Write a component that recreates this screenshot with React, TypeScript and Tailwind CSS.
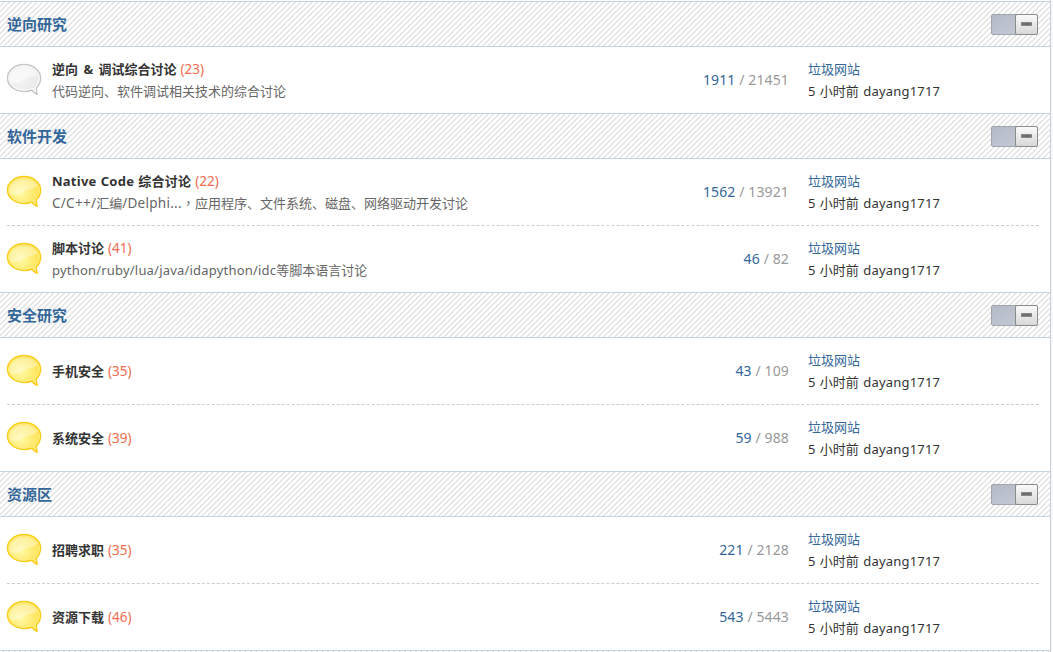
import type { ReactNode } from "react";
import clsx from "clsx";

type Forum = {
    name: string;
    nameClasses?: string;
    today: number;
    desc?: ReactNode;
    threads: number;
    posts: number;
    read?: boolean;
};

type Category = {
    title: string;
    forums: Forum[];
};

const categories: Category[] = [
    {
        title: "逆向研究",
        forums: [
            {
                name: "逆向 & 调试综合讨论",
                nameClasses: "[word-spacing:2px]",
                today: 23,
                desc: "代码逆向、软件调试相关技术的综合讨论",
                threads: 1911,
                posts: 21451,
                read: true,
            },
        ],
    },
    {
        title: "软件开发",
        forums: [
            {
                name: "Native Code 综合讨论",
                nameClasses: "tracking-[0.25px] [word-spacing:0.5px]",
                today: 22,
                desc: (
                    <>
                        <span className="text-[13.5px] tracking-[0.27px]">C/C++/</span>汇编
                        <span className="text-[13.5px] tracking-[0.27px]">/Delphi...</span>
                        <span className="font-['Noto_Sans_CJK_TC',sans-serif] leading-none">，</span>应用程序、文件系统、磁盘、网络驱动开发讨论
                    </>
                ),
                threads: 1562,
                posts: 13921,
            },
            {
                name: "脚本讨论",
                today: 41,
                desc: (
                    <>
                        <span className="tracking-[0.2px]">python/ruby/lua/java/idapython/idc</span>等脚本语言讨论
                    </>
                ),
                threads: 46,
                posts: 82,
            },
        ],
    },
    {
        title: "安全研究",
        forums: [
            { name: "手机安全", today: 35, threads: 43, posts: 109 },
            { name: "系统安全", today: 39, threads: 59, posts: 988 },
        ],
    },
    {
        title: "资源区",
        forums: [
            { name: "招聘求职", today: 35, threads: 221, posts: 2128 },
            { name: "资源下载", today: 46, threads: 543, posts: 5443 },
        ],
    },
];

const hatch = "bg-[repeating-linear-gradient(135deg,#fff_0px,#fff_1.9px,#dfdfdf_2.6px,#dfdfdf_3.1px,#fff_3.889px)]";

const BubbleIcon = ({ read }: { read?: boolean }) => {
    const id = read ? "bubble-read" : "bubble-new";
    return (
        <svg width="36" height="33" viewBox="0 0 36 33" className="block shrink-0">
            <defs>
                <radialGradient id={id} cx="0.4" cy="0.55" r="0.65">
                    <stop offset="0" stopColor={read ? "#f3f3f3" : "#fffaa8"} />
                    <stop offset="1" stopColor={read ? "#e8e8e8" : "#ffe04a"} />
                </radialGradient>
            </defs>
            <path
                d="M18 1.5C8.8 1.5 1.5 7.5 1.5 15S8.8 28.5 18 28.5c2.9 0 5.6-.5 8-1.5 1.2 2.2 3 3.700 5.300 4.200-.9-1.900-1.200-4.100-.8-6.500 2.600-2.500 4.100-5.800 4.100-9.700C34.600 7.500 27.200 1.500 18 1.500Z"
                fill={`url(#${id})`}
                stroke={read ? "#c6c6c6" : "#fccb16"}
                strokeWidth="1.4"
                strokeLinejoin="round"
            />
            <path
                d="M18 2.9C9.6 2.9 2.9 8.3 2.9 15S9.6 27.1 18 27.1c3.1 0 6-.6 8.6-1.8.7 1.5 1.5 2.6 2.6 3.5-.3-1.600-.4-3.200 0-4.700 2.600-2.400 4-5.500 4-9.100C33.200 8.300 26.400 2.900 18 2.900Z"
                fill="none"
                stroke={read ? "#fff" : "#ffee85"}
                strokeWidth="1"
            />
            <path
                d="M3.8 15C3.8 8.8 10 4 18 4c6.3 0 11.5 2.8 13.6 7-4.5 3.5-9 2.5-14 5.5-4 2.5-7.5 3.8-12 3.600-1.200-1.500-1.800-3.200-1.800-5.100Z"
                fill="#fff"
                fillOpacity={read ? 0.55 : 0.35}
            />
        </svg>
    );
};

const CollapseToggle = () => (
    <div className="flex h-[21px] w-[47px] rounded-[2px] border border-[#a0a5ae] bg-linear-to-br from-[#b3bac6] to-[#c8ced8]">
        <div className="-my-px -mr-px ml-auto flex h-[21px] w-[23px] items-center justify-center rounded-[2px] border border-[#8b8b8b] bg-linear-to-b from-[#fafafa] to-[#d8d8d8]">
            <div className="h-[4px] w-[11px] border border-[#8a8a8a] bg-[#6d6d6d]" />
        </div>
    </div>
);

const ForumRow = ({ forum, divided }: { forum: Forum; divided: boolean }) => (
    <div className={clsx("mr-[11px] ml-[7px] flex items-center border-[#cdcdcd]", divided ? "h-[67px] border-b border-dashed" : "h-[66px]")}>
        <div className="-ml-px w-[46px] pb-[2px]">
            <BubbleIcon read={forum.read} />
        </div>
        <div className="flex-1 leading-[22px]">
            <h3 className="text-[#f26c4f]">
                <span className={clsx("font-bold text-[#333]", forum.nameClasses)}>{forum.name}</span>{" "}
                <span className="ml-[0.5px] text-[13.5px]">({forum.today})</span>
            </h3>
            {forum.desc && <p className="text-[#666]">{forum.desc}</p>}
        </div>
        <div className="w-[120px] pb-[2px] text-right text-[14px] tracking-[0.12px] text-[#999]">
            <span className="text-[#336699]">{forum.threads}</span> / {forum.posts}
        </div>
        <div className="ml-[19px] w-[231px] leading-[22px]">
            <p className="text-[#336699]">垃圾网站</p>
            <p className="text-[#333] [word-spacing:1px]">
                5 小时前 <span className="tracking-[0.2px]">dayang1717</span>
            </p>
        </div>
    </div>
);

const App = () => {
    return (
        <div className="h-[652px] overflow-hidden bg-[#f5f9f9] font-['Noto_Sans','Noto_Sans_CJK_SC',sans-serif] text-[13px]">
            <div className="h-full w-[1051px] border-r border-[#c8d0d0] bg-white pt-px">
                {categories.map((category) => (
                    <section key={category.title}>
                        <div className={clsx("flex h-[46px] items-center justify-between border-y border-[#c2d5e3] pr-[12px] pl-[7px]", hatch)}>
                            <h2 className="text-[15px] font-bold text-[#336699]">{category.title}</h2>
                            <CollapseToggle />
                        </div>
                        {category.forums.map((forum, index) => (
                            <ForumRow key={forum.name} forum={forum} divided={index < category.forums.length - 1} />
                        ))}
                    </section>
                ))}
                <div className={clsx("h-[46px] border-t border-[#c2d5e3]", hatch)} />
            </div>
        </div>
    );
};

export default App;
